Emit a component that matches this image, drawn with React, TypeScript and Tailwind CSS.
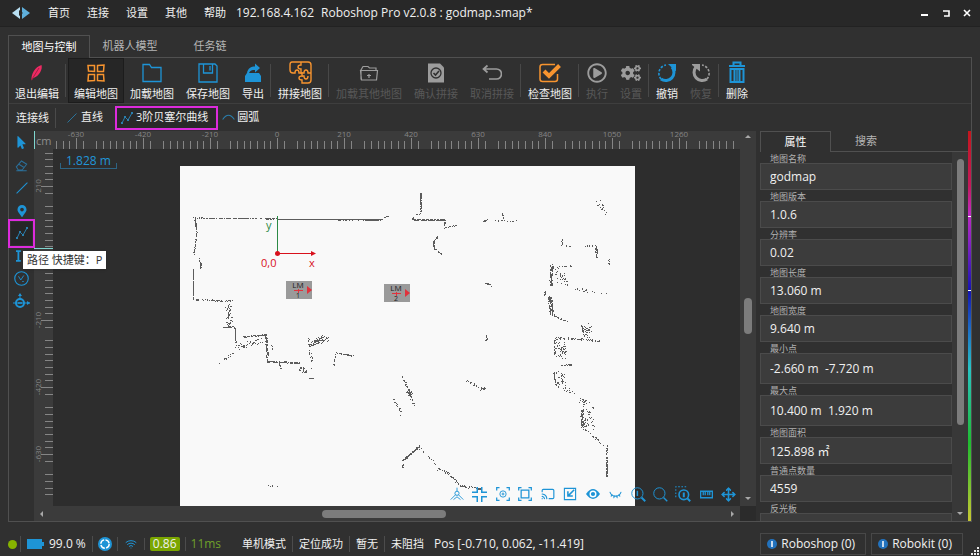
import type { ReactNode } from 'react'
import { Cast, EyeClosed, Move, Wifi } from 'lucide-react'
import { FaCogs, FaMapMarkerAlt, FaMousePointer, FaRegPlayCircle } from 'react-icons/fa'

const BLUE = '#1e94d6'
const ORANGE = '#f7942f'
const GRAY = '#9c9c9c'

const menus = ['首页', '连接', '设置', '其他', '帮助']

function Svg({ size = 20, color = BLUE, children }: { size?: number; color?: string; children: ReactNode }) {
  return (
    <svg width={size} height={size} viewBox="0 0 20 20" fill="none" stroke={color} strokeWidth="1.3">
      {children}
    </svg>
  )
}

type Tool = { label: string; icon: ReactNode; disabled?: boolean; active?: boolean }

const toolGroups: Tool[][] = [
  [
    {
      label: '退出编辑',
      icon: (
        <Svg>
          <path d="M4.500 17.500C4 11 8 4 14.500 2C15.800 6 12.500 13 6.500 15Z" fill="#ee2a63" stroke="none" />
          <path d="M4.500 17L12 5" stroke="#8f1a3c" strokeWidth="0.800" />
        </Svg>
      ),
    },
  ],
  [
    {
      label: '编辑地图',
      active: true,
      icon: (
        <Svg color={ORANGE}>
          <path d="M2 2.500H8.500V8.500L2.500 8ZM11.500 2.500L18 2L17.500 8.500H11.500ZM2.500 11.500H8.500V17.500L2 18ZM11.500 11.500H17.500L18 18L11.500 17.500Z" strokeWidth="1.500" />
        </Svg>
      ),
    },
    { label: '加载地图', icon: <Svg><path d="M1 1.500H7.500L9.500 4.500H19V18.500H1Z" /></Svg> },
    {
      label: '保存地图',
      icon: <Svg><path d="M1 1H17L19 3V19H1ZM5.500 1V10H14.500V1M12 3V7.500" /></Svg>,
    },
    {
      label: '导出',
      icon: (
        <Svg>
          <path d="M2 13L4 10H16L18 13V19H2Z" fill={BLUE} stroke="none" />
          <path d="M4 10C5 5 8 3.500 12 3.500V0.500L17 5L12 9.500V7C9 7 7 7.500 6 10Z" fill={BLUE} stroke="none" />
        </Svg>
      ),
    },
  ],
  [
    {
      label: '拼接地图',
      icon: (
        <svg width="23" height="23" viewBox="0 0 23 23" fill="none" stroke={ORANGE} strokeWidth="1.4">
          <path d="M3 1H19Q22 1 22 4V19Q22 22 19 22H13V19Q10 19 10 17Q10 15 13 15V12H10Q10 9 8 9Q6 9 6 12H4Q1 12 1 9V4Q1 1 3 1Z" />
          <path d="M12 1V4Q9 4 9 6Q9 8 12 8V12H15Q15 9 17 9Q19 9 19 12H22M13 15H15Q15 18 17 18Q19 18 19 15" />
        </svg>
      ),
    },
  ],
  [
    {
      label: '加载其他地图',
      disabled: true,
      icon: (
        <Svg color={GRAY}>
          <path d="M2 16.500V7L4 3.500H9L10.500 5H17V7M1.500 7.500H18.500L17.500 17H2.500ZM10 11V15M8 12.500H12" strokeWidth="1.200" />
        </Svg>
      ),
    },
    {
      label: '确认拼接',
      disabled: true,
      icon: (
        <Svg color={GRAY}>
          <path d="M2 0.500H14L18 4.500V19.500H2Z" fill={GRAY} stroke="none" />
          <circle cx="10" cy="10" r="5" stroke="#303030" />
          <path d="M7.500 10L9.500 12L13 8" stroke="#303030" strokeWidth="1.600" />
        </Svg>
      ),
    },
    {
      label: '取消拼接',
      disabled: true,
      icon: <Svg color={GRAY}><path d="M5.500 2.500L1.500 6L5.500 9.500M2 6H14.500A5 5 0 0 1 14.500 16H7" strokeWidth="1.700" /></Svg>,
    },
  ],
  [
    {
      label: '检查地图',
      icon: (
        <svg width="22" height="20" viewBox="0 0 22 20" fill="none" stroke={ORANGE}>
          <path d="M18.500 11V16Q18.500 18.500 16 18.500H3.500Q1 18.500 1 16V4Q1 1.500 3.500 1.500H16" strokeWidth="1.500" />
          <path d="M5 8L10 13L20.500 2.500" strokeWidth="4" />
        </svg>
      ),
    },
  ],
  [
    { label: '执行', disabled: true, icon: <FaRegPlayCircle size={20} color={GRAY} /> },
    { label: '设置', disabled: true, icon: <FaCogs size={20} color={GRAY} /> },
  ],
  [
    {
      label: '撤销',
      icon: (
        <Svg>
          <path d="M15 4A8.200 8.200 0 0 1 4 16" strokeWidth="3" />
          <path d="M4 16A8.500 8.500 0 0 1 9 2" strokeWidth="1.600" strokeDasharray="2.500 1.500" />
          <path d="M11 1H19V8.500Z" fill={BLUE} stroke="none" />
        </Svg>
      ),
    },
    {
      label: '恢复',
      disabled: true,
      icon: (
        <Svg color={GRAY}>
          <path d="M5 4A8.200 8.200 0 0 0 16 16" strokeWidth="3" />
          <path d="M16 16A8.500 8.500 0 0 0 11 2" strokeWidth="1.600" strokeDasharray="2.500 1.500" />
          <path d="M9 1H1V2L9 8.500Z" fill={GRAY} stroke="none" />
        </Svg>
      ),
    },
  ],
  [
    {
      label: '删除',
      icon: (
        <svg width="20" height="23" viewBox="0 0 20 23" fill="none" stroke={BLUE} strokeWidth="2">
          <path d="M2 5H18M6.500 4V1.500H13.500V4M3.500 8V21H16.500V8ZM7.500 8V21M12.500 8V21" />
          <path d="M10 8V21" strokeWidth="1.300" />
        </svg>
      ),
    },
  ],
]

const sideTools = [
  { name: '选择', icon: <FaMousePointer size={13} color={BLUE} /> },
  {
    name: '橡皮擦',
    icon: <Svg size={13} color="#2b6f99"><path d="M2 12L10 3L18 8L11 17H5ZM6 8L14 13M2 18H18" strokeWidth="1.600" /></Svg>,
  },
  { name: '线', icon: <Svg size={12}><path d="M1 19L19 1" strokeWidth="1.700" /></Svg> },
  { name: '点', icon: <FaMapMarkerAlt size={12} color={BLUE} /> },
  { name: '路径', icon: <PathIcon />, active: true },
  { name: '区域', icon: <Svg size={12}><path d="M4 2V18M0 2H8M0 18H8" strokeWidth="3" /><path d="M15 8V18" /></Svg> },
  {
    name: '旋转',
    icon: <Svg size={15}><circle cx="10" cy="10" r="9" strokeWidth="1.500" /><path d="M6 7L9 12L13 6M11 14H13" strokeWidth="1.200" /></Svg>,
  },
  {
    name: '机器人',
    icon: (
      <svg width="17" height="17" viewBox="0 0 17 17" fill="none" stroke={BLUE} strokeWidth="2">
        <circle cx="7" cy="10" r="4" />
        <path d="M0 10H17M7 1V6" strokeWidth="1" />
        <path d="M5 3L7 0L9 3ZM14 8L17 10L14 12Z" fill={BLUE} stroke="none" />
        <path d="M5 10H9" strokeWidth="1.500" />
      </svg>
    ),
  },
]

function PathIcon() {
  return (
    <svg width="12" height="12" viewBox="0 0 12 12" fill="none" stroke="#2a7fae" strokeWidth="1">
      <path d="M1 11L4 5L7 8L11 1" />
      <path d="M0 10H2V12H0ZM3 4H5V6H3ZM6 7H8V9H6ZM10 0H12V2H10Z" fill="#2a7fae" stroke="none" />
    </svg>
  )
}

const viewTools = [
  {
    name: '激光',
    icon: <Svg size={14}><circle cx="10" cy="9" r="3" /><path d="M10 1V6M8 11L1 18M12 11L19 18M5 18L10 14L15 18" /></Svg>,
  },
  {
    name: '居中',
    icon: <Svg size={15}><path d="M7 0V7H0M13 0V7H20M7 20V13H0M13 20V13H20" strokeWidth="2" /></Svg>,
  },
  {
    name: '定位机器人',
    icon: <Svg size={14}><path d="M1 5V1H5M15 1H19V5M19 15V19H15M5 19H1V15" strokeWidth="1.800" /><circle cx="10" cy="10" r="4.500" /><path d="M10 8V12M8 10H12" /></Svg>,
  },
  {
    name: '适应窗口',
    icon: <Svg size={14}><path d="M1 5V1H5M15 1H19V5M19 15V19H15M5 19H1V15M4.500 4.500H15.500V15.500H4.500Z" strokeWidth="1.800" /></Svg>,
  },
  { name: '投屏', icon: <Cast size={14} /> },
  {
    name: '导入',
    icon: <Svg size={14}><path d="M2 2H18V18H2Z" strokeWidth="1.600" /><path d="M16 4L7 13M7 6V13H14" strokeWidth="2.200" /></Svg>,
  },
  { name: '显示', icon: <Svg size={14}><path d="M0 10Q10 -4 20 10Q10 24 0 10Z" fill={BLUE} stroke="none" /><circle cx="10" cy="10" r="4" fill={BLUE} stroke="#fff" strokeWidth="2" /></Svg> },
  { name: '隐藏', icon: <EyeClosed size={13} /> },
  { name: '放大', icon: <Svg size={15}><circle cx="8.500" cy="8.500" r="7.500" /><path d="M14 14L19 19" strokeWidth="2.500" /><path d="M8.500 5V12" strokeWidth="2" /></Svg> },
  { name: '缩小', icon: <Svg size={15}><circle cx="8.500" cy="8.500" r="7.500" /><path d="M14 14L19 19" strokeWidth="1.800" /></Svg> },
  { name: '框选缩放', icon: <Svg size={16}><path d="M1 14V1H14" strokeDasharray="2 2" /><circle cx="11" cy="11" r="6" strokeWidth="2" /><path d="M15.500 15.500L19 19M11 8V14" strokeWidth="2.500" /></Svg> },
  { name: '测距', icon: <Svg size={13}><path d="M1 5H19V15H1ZM5 5V11M8 5V11M12 5V11M15 5V11" strokeWidth="2" /></Svg> },
  { name: '平移', icon: <Move size={15} strokeWidth={2.500} /> },
]

const fields = [
  { label: '地图名称', value: 'godmap' },
  { label: '地图版本', value: '1.0.6' },
  { label: '分辨率', value: '0.02' },
  { label: '地图长度', value: '13.060 m' },
  { label: '地图宽度', value: '9.640 m' },
  { label: '最小点', value: '-2.660 m  -7.720 m', tall: true },
  { label: '最大点', value: '10.400 m  1.920 m', tall: true },
  { label: '地图面积', value: '125.898 ㎡' },
  { label: '普通点数量', value: '4559' },
  { label: '反光板', value: '' },
]

// scan points along a segment: x1, y1, x2, y2, count, spread
type Scan = [number, number, number, number, number, number]

const scans: Scan[] = [
  [13, 52, 97, 53, 110, 0.5],
  [97, 53.500, 203, 53.500, 420, 0.4],
  [155, 54, 202, 54, 50, 1],
  [204, 52, 209, 50, 6, 0.5],
  [15, 53, 17, 66, 26, 1],
  [17, 66, 14, 89, 34, 1],
  [20, 91, 21, 103, 18, 1.5],
  [13.500, 103, 13.500, 134, 80, 0.2],
  [15, 134, 53, 135, 46, 1.5],
  [48, 137, 50, 161, 54, 6],
  [43, 162, 54, 161, 20, 0.6],
  [55, 161, 56, 177, 34, 0.7],
  [63, 171, 86, 169, 48, 1],
  [57, 181, 85, 174, 44, 5],
  [39, 197, 55, 186, 14, 2],
  [86, 169, 88, 196, 66, 2],
  [87, 196, 120, 197, 84, 1.5],
  [100, 197, 101, 203, 10, 1],
  [120, 202, 127, 206, 26, 4],
  [128, 212, 134, 213, 6, 0.5],
  [130, 184, 132, 204, 14, 3],
  [128, 173, 130, 180, 14, 2],
  [131, 178, 142, 175, 46, 5],
  [138, 175, 148, 171, 30, 7],
  [154, 199, 156, 188, 14, 0.7],
  [156, 187, 173, 190, 34, 0.8],
  [92, 180, 93, 183, 5, 1],
  [241, 27, 241, 48, 46, 1],
  [233, 51, 233, 54, 8, 1],
  [236, 49, 241, 48, 6, 1],
  [233, 54, 264, 54, 90, 0.5],
  [265, 54, 265, 62, 18, 0.4],
  [266, 62, 278, 59, 9, 1],
  [260, 69, 254, 75, 13, 1],
  [254, 75, 254, 82, 24, 1],
  [254, 82, 262, 89, 20, 1],
  [303, 55, 309, 54, 10, 2],
  [315, 55, 337, 55, 15, 1],
  [323, 48, 324, 55, 12, 1.5],
  [418, 37, 424, 45, 17, 8],
  [382, 72, 382, 80, 10, 1],
  [387, 80, 393, 81, 4, 0.5],
  [405, 80, 416, 80, 8, 0.5],
  [416, 80, 417, 92, 32, 2],
  [429, 93, 429, 99, 9, 1],
  [372, 99, 371, 120, 72, 3],
  [377, 104, 385, 118, 30, 9],
  [375, 101, 392, 100, 10, 1],
  [365, 125, 365, 131, 10, 1],
  [370, 132, 372, 149, 100, 4],
  [373, 149, 387, 156, 18, 2],
  [396, 123, 425, 127, 16, 4],
  [305, 116, 311, 120, 12, 2],
  [307, 169, 306, 175, 15, 2],
  [402, 160, 403, 167, 18, 1.5],
  [407, 161, 408, 170, 34, 8],
  [375, 172, 421, 175, 56, 2],
  [375, 173, 375, 191, 30, 1],
  [381, 176, 382, 192, 52, 10],
  [382, 199, 392, 199, 20, 1.5],
  [374, 206, 376, 220, 28, 1],
  [380, 208, 382, 222, 38, 9],
  [384, 222, 393, 227, 12, 5],
  [402, 235, 406, 240, 22, 8],
  [402, 244, 403, 262, 64, 3],
  [408, 245, 410, 262, 40, 11],
  [403, 262, 425, 280, 22, 1.5],
  [427, 280, 427, 311, 70, 1.5],
  [222, 210, 230, 226, 30, 1.5],
  [228, 225, 231, 228, 22, 5],
  [230, 227, 234, 240, 20, 1.5],
  [214, 233, 222, 248, 17, 3],
  [285, 214, 303, 223, 20, 1.5],
  [300, 224, 306, 222, 12, 1.5],
  [240, 280, 223, 295, 76, 1.6],
  [223, 296, 223, 302, 6, 0.4],
  [240, 282, 258, 301, 13, 2],
  [258, 303, 268, 307, 15, 2],
  [268, 307, 280, 320, 25, 1.5],
  [280, 320, 302, 323, 40, 1.5],
  [88, 320, 98, 320, 7, 0.5],
]

function scanPath(list: Scan[]) {
  let seed = 7
  const rand = () => {
    seed = (seed * 16807) % 2147483647
    return seed / 2147483647
  }
  let d = ''
  for (const [x1, y1, x2, y2, count, spread] of list) {
    for (let i = 0; i < count; i++) {
      const t = rand()
      const x = Math.floor(x1 + (x2 - x1) * t + (rand() - 0.5) * spread)
      const y = Math.floor(y1 + (y2 - y1) * t + (rand() - 0.5) * spread)
      d += `M${x} ${y}h1v1h-1z`
    }
  }
  return d
}

const cloud = scanPath(scans)

function Landmark({ x, y, id }: { x: number; y: number; id: string }) {
  return (
    <g transform={`translate(${x} ${y})`}>
      <rect width="26" height="18" fill="#9a9a9a" />
      <path d="M8 9.500H17M12.500 8V12" stroke="#e0323c" />
      <text x="12" y="7" fontSize="8" textAnchor="middle" fill="#222">LM</text>
      <text x="12" y="17" fontSize="7" textAnchor="middle" fill="#222">{id}</text>
      <path d="M21 5L26 9L21 13Z" fill="#e0323c" />
    </g>
  )
}

const STEP = 67

function Ruler({ vertical = false }: { vertical?: boolean }) {
  // first major tick and its value
  const start = vertical ? 37 : 23
  const first = vertical ? 210 : -630
  const end = vertical ? 346 : 686
  const majors = Array.from({ length: vertical ? 5 : 10 }, (_, i) => ({
    pos: start + i * STEP,
    value: vertical ? first - i * 210 : first + i * 210,
  }))
  const minors: number[] = []
  for (let k = -5; k < majors.length * 10; k++) {
    const pos = Math.round(start + (k * STEP) / 10)
    if (k % 10 !== 0 && (k + 20) % 10 !== 2 && pos > 0 && pos < end) minors.push(pos)
  }
  return (
    <svg className="block h-full w-full overflow-visible" fill="none" stroke="#858585">
      {minors.map((p) => (
        <path key={p} d={vertical ? `M11 ${p}.5H19` : `M${p}.5 10V18`} />
      ))}
      {majors.map(({ pos, value }) => (
        <g key={value}>
          <path d={vertical ? `M7 ${pos}.5H19` : `M${pos}.5 7V18`} />
          {!(vertical && value === 0) && (
            <text
              x={vertical ? 0 : pos}
              y={vertical ? 0 : 6}
              transform={vertical ? `translate(7 ${pos}) rotate(-90)` : undefined}
              fontSize="8"
              textAnchor="middle"
              fill="#858585"
              stroke="none"
            >
              {value}
            </text>
          )}
        </g>
      ))}
      {vertical && <path d="M0 99.500H19" stroke="#7fd6cf" />}
    </svg>
  )
}

function Arrow({ dir }: { dir: 'up' | 'down' | 'left' | 'right' }) {
  const d = { up: 'M1 5L4 2L7 5Z', down: 'M1 3L4 6L7 3Z', left: 'M5 1L2 4L5 7Z', right: 'M3 1L6 4L3 7Z' }[dir]
  return (
    <svg width="8" height="8" fill="#a8a8a8">
      <path d={d} />
    </svg>
  )
}

function TitleBar() {
  return (
    <header className="flex h-[27px] shrink-0 items-center border-b border-[#222] bg-[#282828] pr-2 pl-3">
      <svg width="18" height="14" viewBox="0 0 18 14">
        <path d="M0 7L8 1V13Z" fill="#b9dff2" />
        <path d="M18 7L10 1V13Z" fill="#5fb0dc" />
        <path d="M7 4L11 7L7 10Z" fill="#282828" />
      </svg>
      <nav className="ml-[18px] flex gap-[17px] text-[11px]">
        {menus.map((m) => (
          <button key={m}>{m}</button>
        ))}
      </nav>
      <span className="ml-2.5">192.168.4.162</span>
      <h1 className="ml-[7px] grow">Roboshop Pro v2.0.8 : godmap.smap*</h1>
      <div className="flex gap-[11px]">
        <button aria-label="最小化">
          <svg width="10" height="10" stroke="#fff" strokeWidth="2"><path d="M1 7H8" /></svg>
        </button>
        <button aria-label="最大化">
          <svg width="10" height="10" stroke="#fff" fill="none"><path d="M2 3H8V8H3" strokeWidth="1.600" /></svg>
        </button>
        <button aria-label="关闭">
          <svg width="10" height="10" stroke="#fff" strokeWidth="1.600"><path d="M2 2L8 8M8 2L2 8" /></svg>
        </button>
      </div>
    </header>
  )
}

function Toolbar() {
  return (
    <div className="flex h-[46px] shrink-0 border-b border-[#3e3e3e]">
      {toolGroups.map((group, i) => (
        <div key={i} className="flex">
          {i > 0 && <span className={`my-1.5 w-px bg-[#484848] ${i === 1 ? 'mr-0.5' : 'mr-px'}`} />}
          {group.map((t) => (
            <button
              key={t.label}
              disabled={t.disabled}
              className={`flex h-full flex-col items-center text-[11px] leading-4 ${
                t.active ? 'border border-[#1c1c1c] bg-[#262626] px-[5px]' : 'border-y border-transparent px-1.5'
              } ${t.disabled ? 'text-[#585858]' : 'text-[#f0f0f0]'}`}
            >
              <span className="flex h-[27px] items-center justify-center">{t.icon}</span>
              {t.label}
            </button>
          ))}
        </div>
      ))}
    </div>
  )
}

function PathToolbar() {
  return (
    <div className="flex h-[27px] shrink-0 items-center pl-[7px] text-[11px]">
      <span className="border-r border-[#4a4a4a] pr-1.5 leading-5">连接线</span>
      <button className="flex items-center gap-1 pr-3 pl-[11px]">
        <Svg size={10} color="#2a7fae"><path d="M1 19L19 1" strokeWidth="1.700" /></Svg>
        直线
      </button>
      <button className="flex h-6 items-center gap-[3px] border-2 border-[#dc2bdc] bg-[#292929] pr-2 pl-1">
        <PathIcon />
        3阶贝塞尔曲线
      </button>
      <button className="flex items-center gap-0.5 px-1">
        <Svg size={13} color="#2a7fae"><path d="M1 13Q10 0 19 13" strokeWidth="1.700" /></Svg>
        圆弧
      </button>
    </div>
  )
}

function SideTools() {
  return (
    <div className="relative w-[25px] shrink-0">
      <div className="grid h-[182px] grid-rows-8">
        {sideTools.map((t) => (
          <button
            key={t.name}
            aria-label={t.name}
            className={`flex items-center justify-center ${
              t.active ? 'mx-0.5 bg-[#262626] outline-2 outline-offset-1 outline-[#dc2bdc]' : ''
            }`}
          >
            {t.icon}
          </button>
        ))}
      </div>
      <div role="tooltip" className="absolute top-[120px] left-[14px] z-20 bg-white px-1 text-[11px] leading-[18px] whitespace-pre text-[#333] shadow">
        路径 快捷键：P
      </div>
    </div>
  )
}

function MapView() {
  return (
    <div className="grid min-w-0 grow grid-cols-[19px_minmax(0,1fr)_16px] grid-rows-[18px_minmax(0,1fr)_15px] bg-[#3b3b3b]">
      <div className="border-l border-[#7fd6cf] pl-px text-[11px] leading-5 text-[#8d8d8d]">cm</div>
      <Ruler />
      <div className="row-span-2 flex flex-col items-center pt-0.5 pb-1">
        <Arrow dir="up" />
        <div className="grow-[156]" />
        <div className="h-9 w-2 rounded-sm bg-[#7c7c7c]" />
        <div className="grow-[159]" />
        <Arrow dir="down" />
      </div>
      <Ruler vertical />
      <div className="relative overflow-hidden bg-[#2d2d2d]">
        <div className="absolute top-[17px] bottom-0 left-[127px] w-[455px] bg-[#f9f9f9]">
          <svg width="455" height="340">
            <path d={cloud} fill="#5c5c5c" />
            <path d="M97.500 50V87" stroke="#2c8a45" />
            <path d="M97 87.500H132" stroke="#d8101c" />
            <path d="M131 85L136 87.500L131 90Z" fill="#d8101c" />
            <circle cx="97.500" cy="87.500" r="2.500" fill="#d8101c" />
            <text x="86" y="63" fontSize="11" fill="#2c8a45">y</text>
            <text x="81" y="101" fontSize="11" fill="#d8101c">0,0</text>
            <text x="129" y="101" fontSize="11" fill="#d8101c">x</text>
            <Landmark x={106} y={115} id="1" />
            <Landmark x={204} y={118} id="2" />
          </svg>
        </div>
        <div className="absolute top-1 left-[7px]">
          <div className="px-1.5 text-xs leading-4 text-[#2196d8]">1.828 m</div>
          <div className="-mt-1.5 h-1.5 border border-t-0 border-[#2d6484]" />
        </div>
        <div className="absolute right-0 bottom-1 grid h-4 w-[294px] grid-cols-13 text-[#1e94d6]">
          {viewTools.map((t) => (
            <button key={t.name} aria-label={t.name} className="flex items-center justify-center">
              {t.icon}
            </button>
          ))}
        </div>
      </div>
      <div className="col-span-2 flex items-center px-1">
        <Arrow dir="left" />
        <div className="grow-[275]" />
        <div className="h-2 w-[124px] rounded-sm bg-[#7c7c7c]" />
        <div className="grow-[280]" />
        <Arrow dir="right" />
      </div>
      <div className="bg-[#2b2b2b]" />
    </div>
  )
}

function Properties() {
  return (
    <aside className="flex w-[208px] shrink-0 flex-col">
      <div role="tablist" className="flex h-[21px] shrink-0 text-[11px]">
        <button role="tab" aria-selected="true" className="w-[71px] border border-b-0 border-[#505050] text-white">
          属性
        </button>
        <button role="tab" aria-selected="false" className="w-[70px] border-b border-[#505050] text-[#b5b5b5]">
          搜索
        </button>
        <span className="grow border-b border-[#505050]" />
      </div>
      <div className="flex min-h-0 grow">
        <form className="w-[192px] overflow-hidden">
          {fields.map((f) => (
            <div key={f.label} className="flex flex-col">
              <label htmlFor={f.label} className="relative z-10 h-[11px] pl-[10px] text-[9px] leading-[14px] text-[#b0b0b0]">
                {f.label}
              </label>
              <input
                id={f.label}
                readOnly
                value={f.value}
                className={`w-full border border-[#4b4b4b] bg-[#3c3c3c] px-[9px] text-xs text-[#f0f0f0] ${f.tall ? 'h-[31px]' : 'h-[27px]'}`}
              />
            </div>
          ))}
        </form>
        <div className="flex grow flex-col items-center bg-[#383838] pt-[7px] pb-1">
          <div className="w-[7px] grow-[268] rounded-sm bg-[#7c7c7c]" />
          <div className="grow-[84]" />
          <Arrow dir="down" />
        </div>
      </div>
    </aside>
  )
}

function HeightScale() {
  return (
    <div className="flex w-[3px] shrink-0 flex-col items-stretch bg-[linear-gradient(#c4161c,#c41a5a_14%,#c02ac0_21%,#8a24c4_28%,#1414b4_41%,#1e78c8_52%,#28c4c4_61%,#20bc30_80%,#c8c832)]">
      <span className="h-[22%] border-b border-white" />
      <span className="h-[19%] border-b border-white" />
    </div>
  )
}

function StatusBar() {
  return (
    <footer className="flex h-[34px] shrink-0 items-center pt-2.5 pl-2">
      <span className="size-[9px] rounded-full bg-[#86b300]" />
      <div className="ml-[3px] flex h-4 grow items-center divide-x divide-[#4c4c4c] border-l border-[#4c4c4c] leading-4">
        <span className="flex items-center gap-[5px] px-1.5">
          <svg width="17" height="10" fill={BLUE}><path d="M0 0H15V3H17V7H15V10H0Z" /></svg>
          99.0 %
        </span>
        <span className="px-[5px]">
          <svg width="14" height="14" viewBox="0 0 14 14" fill="none">
            <circle cx="7" cy="7" r="7" fill={BLUE} />
            <circle cx="7" cy="7" r="4.200" stroke="#fff" strokeWidth="1.400" strokeDasharray="5.200 1.400" />
          </svg>
        </span>
        <span className="px-[7px]"><Wifi size={12} color={BLUE} /></span>
        <span className="px-[5px]">
          <span className="block rounded-xs bg-[#7ba600] px-[3px] leading-[14px]">0.86</span>
        </span>
        <span className="mr-2.5 border-none px-[5px] text-[#6fa12a]">11ms</span>
        <span className="px-1.5 text-[11px]">单机模式</span>
        <span className="px-1.5 text-[11px]">定位成功</span>
        <span className="px-1.5 text-[11px]">暂无</span>
        <span className="border-none px-1.5 text-[11px]">未阻挡</span>
        <span className="pl-1">Pos [-0.710, 0.062, -11.419]</span>
      </div>
      <div className="flex gap-[5px]">
        {['Roboshop (0)', 'Robokit (0)'].map((name) => (
          <button key={name} className="flex h-[22px] items-center gap-1 border border-[#484848] pr-2.5 pl-1.5">
            <svg width="10" height="10">
              <circle cx="5" cy="5" r="5" fill="#2272bd" />
              <path d="M5 2V8" stroke="#fff" strokeWidth="1.500" />
            </svg>
            {name}
          </button>
        ))}
      </div>
      <svg className="ml-2 self-end" width="9" height="9" fill="#e8e8e8">
        <path d="M6 0H8V2H6ZM3 3H5V5H3ZM6 3H8V5H6ZM0 6H2V8H0ZM3 6H5V8H3ZM6 6H8V8H6Z" />
      </svg>
    </footer>
  )
}

export default function App() {
  return (
    <div className="flex h-screen min-h-[400px] flex-col overflow-hidden bg-[#303030] font-['Open_Sans','Noto_Sans_CJK_SC',sans-serif] text-xs text-[#f0f0f0]">
      <TitleBar />
      <main className="mx-2 mt-2 flex min-h-0 grow flex-col">
        <div role="tablist" className="flex h-[23px] shrink-0 text-[11px]">
          <button role="tab" aria-selected="true" className="w-[82px] border border-b-0 border-[#505050] text-white">
            地图与控制
          </button>
          <button role="tab" aria-selected="false" className="w-20 border-b border-[#505050] text-[#b5b5b5]">
            机器人模型
          </button>
          <button role="tab" aria-selected="false" className="w-20 border-b border-[#505050] text-[#b5b5b5]">
            任务链
          </button>
          <span className="grow border-b border-[#505050]" />
        </div>
        <div className="flex min-h-0 grow flex-col border border-t-0 border-[#505050]">
          <Toolbar />
          <PathToolbar />
          <div className="flex min-h-0 grow">
            <SideTools />
            <MapView />
            <div className="w-1 shrink-0" />
            <Properties />
            <HeightScale />
          </div>
        </div>
      </main>
      <StatusBar />
    </div>
  )
}
